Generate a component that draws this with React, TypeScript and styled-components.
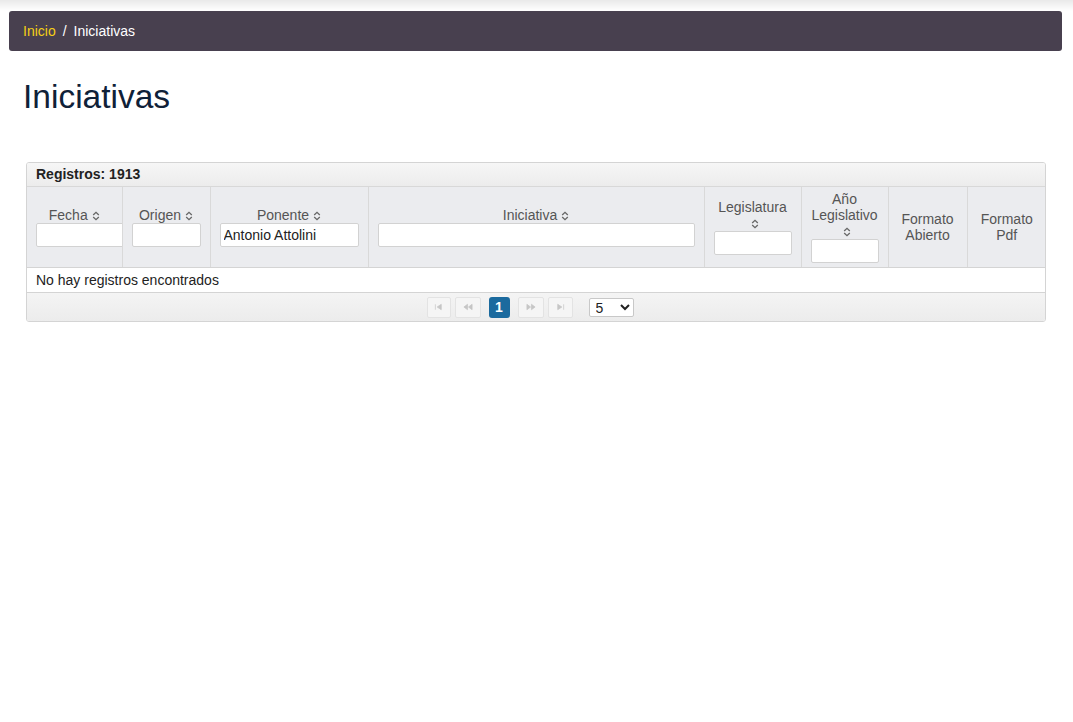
import React from 'react';
import styled, { createGlobalStyle } from 'styled-components';

const GlobalStyle = createGlobalStyle`
  html, body {
    margin: 0;
    padding: 0;
    background: #fff;
  }
  body {
    font-family: "Liberation Sans", Arial, sans-serif;
    font-size: 14px;
    color: #222;
  }
`;

const Page = styled.div`
  min-height: 722px;
  padding: 11px 11px 0 9px;
  background: linear-gradient(to bottom, #e9e9e9 0px, #fff 11px);
  box-sizing: border-box;
`;

const Breadcrumb = styled.nav`
  display: flex;
  align-items: center;
  gap: 7px;
  height: 40px;
  padding: 0 14px;
  background: #48404f;
  border-radius: 3px;
  font-size: 14px;
  color: #fff;
`;

const Crumb = styled.span<{ $link?: boolean }>`
  color: ${p => (p.$link ? '#f5cf16' : '#fff')};
`;

const Title = styled.h1`
  margin: 26px 0 0 14px;
  font-size: 33.5px;
  font-weight: 400;
  line-height: 40px;
  color: #0f2138;
`;

const Panel = styled.div`
  margin: 45px 16px 0 17px;
  border: 1px solid #d4d4d4;
  border-radius: 3px;
  overflow: hidden;
`;

const PanelHeader = styled.div`
  height: 23px;
  line-height: 23px;
  padding: 0 9px;
  font-weight: 700;
  font-size: 14px;
  color: #222;
  background: linear-gradient(to bottom, #f6f6f6, #ececec);
  border-bottom: 1px solid #d8d8d8;
`;

const Table = styled.table`
  width: 100%;
  table-layout: fixed;
  border-collapse: collapse;
`;

const Th = styled.th<{ $clip?: boolean }>`
  height: 80px;
  padding: 0 9px;
  background: #ebecef;
  border-right: 1px solid #d9d9d9;
  border-bottom: 1px solid #d4d4d4;
  font-weight: 400;
  font-size: 14px;
  line-height: 16px;
  color: #555;
  text-align: center;
  vertical-align: middle;
  overflow: ${p => (p.$clip ? 'hidden' : 'visible')};
  &:last-child {
    border-right: none;
  }
`;

const SortIcon = styled.svg`
  display: inline-block;
  width: 8px;
  height: 10px;
  margin-left: 4px;
  vertical-align: -1px;
`;

const FilterInput = styled.input<{ $w?: number }>`
  display: block;
  box-sizing: border-box;
  width: ${p => (p.$w ? `${p.$w}px` : '100%')};
  height: 24px;
  margin: 0;
  padding: 2px 3px;
  border: 1px solid #d2d2d2;
  border-radius: 2px;
  background: #fff;
  font-family: "Liberation Sans", Arial, sans-serif;
  font-size: 14px;
  color: #222;
  outline: none;
`;

const EmptyCell = styled.td`
  height: 24px;
  padding: 0 9px;
  font-size: 14px;
  color: #222;
  background: #fff;
  border-bottom: 1px solid #d4d4d4;
`;

const Paginator = styled.div`
  display: flex;
  align-items: center;
  justify-content: center;
  gap: 4px;
  height: 28px;
  padding-right: 12px;
  background: linear-gradient(to bottom, #f4f4f4, #ececec);
`;

const PageButton = styled.span<{ $w: number }>`
  display: inline-flex;
  align-items: center;
  justify-content: center;
  box-sizing: border-box;
  width: ${p => p.$w}px;
  height: 21px;
  border: 1px solid #e3e3e3;
  border-radius: 2px;
  background: #f5f5f5;
  color: #c9c9c9;
`;

const Pages = styled.span`
  display: inline-flex;
  margin: 0 4px;
`;

const ActivePage = styled.span`
  display: inline-flex;
  align-items: center;
  justify-content: center;
  width: 21px;
  height: 21px;
  border-radius: 3px;
  background: #1b6a9e;
  color: #fff;
  font-weight: 700;
  font-size: 14px;
`;

const RowsSelect = styled.select`
  box-sizing: border-box;
  width: 45px;
  height: 19px;
  margin-left: 12px;
  padding: 0 0 0 2px;
  border: 1px solid #c8c8c8;
  border-radius: 2px;
  background: #fff;
  font-family: "Liberation Sans", Arial, sans-serif;
  font-size: 14px;
  color: #222;
`;

const Sort = () => (
  <SortIcon viewBox="0 0 8 10">
    <path d="M1.2 4 L4 1.3 L6.8 4 M1.2 6 L4 8.7 L6.8 6" fill="none" stroke="#666" strokeWidth="1.3" />
  </SortIcon>
);

type SeekKind = 'first' | 'prev' | 'next' | 'last';

const SeekIcon = ({ kind }: { kind: SeekKind }) => {
  const paths: Record<SeekKind, string> = {
    first: 'M1.5 1v6M8 1L3.5 4 8 7z',
    prev: 'M5 1L1 4l4 3zM10 1L6 4l4 3z',
    next: 'M1 1l4 3-4 3zM6 1l4 3-4 3z',
    last: 'M3 1l4.5 3L3 7zM9.5 1v6',
  };
  return (
    <svg width="10" height="8" viewBox="0 0 11 8">
      <path d={paths[kind]} fill="#c6c6c6" stroke="#c6c6c6" strokeWidth="0.8" />
    </svg>
  );
};

type Column = {
  label: React.ReactNode;
  width: number;
  sort?: boolean;
  filter?: string;
  inputWidth?: number;
  clip?: boolean;
};

const columns: Column[] = [
  { label: 'Fecha', width: 95, sort: true, filter: '', inputWidth: 110, clip: true },
  { label: 'Origen', width: 88, sort: true, filter: '' },
  { label: 'Ponente', width: 158, sort: true, filter: 'Antonio Attolini' },
  { label: 'Iniciativa', width: 336, sort: true, filter: '' },
  { label: 'Legislatura', width: 97, sort: true, filter: '' },
  { label: <>Año<br />Legislativo</>, width: 87, sort: true, filter: '' },
  { label: <>Formato<br />Abierto</>, width: 79 },
  { label: <>Formato<br />Pdf</>, width: 79 },
];

export default function App() {
  return (
    <Page>
      <GlobalStyle />
      <Breadcrumb>
        <Crumb $link>Inicio</Crumb>
        <Crumb>/</Crumb>
        <Crumb>Iniciativas</Crumb>
      </Breadcrumb>
      <Title>Iniciativas</Title>

      <Panel>
        <PanelHeader>Registros: 1913</PanelHeader>
        <Table>
          <colgroup>
            {columns.map((c, i) => <col key={i} style={{ width: c.width }} />)}
          </colgroup>
          <thead>
            <tr>
              {columns.map((c, i) => (
                <Th key={i} $clip={c.clip}>
                  {c.label}
                  {c.sort && <Sort />}
                  {c.filter !== undefined && (
                    <FilterInput $w={c.inputWidth} defaultValue={c.filter} />
                  )}
                </Th>
              ))}
            </tr>
          </thead>
          <tbody>
            <tr>
              <EmptyCell colSpan={columns.length}>No hay registros encontrados</EmptyCell>
            </tr>
          </tbody>
        </Table>
        <Paginator>
          <PageButton $w={24}><SeekIcon kind="first" /></PageButton>
          <PageButton $w={26}><SeekIcon kind="prev" /></PageButton>
          <Pages><ActivePage>1</ActivePage></Pages>
          <PageButton $w={26}><SeekIcon kind="next" /></PageButton>
          <PageButton $w={25}><SeekIcon kind="last" /></PageButton>
          <RowsSelect defaultValue="5">
            <option value="5">5</option>
            <option value="10">10</option>
            <option value="20">20</option>
          </RowsSelect>
        </Paginator>
      </Panel>
    </Page>
  );
}
